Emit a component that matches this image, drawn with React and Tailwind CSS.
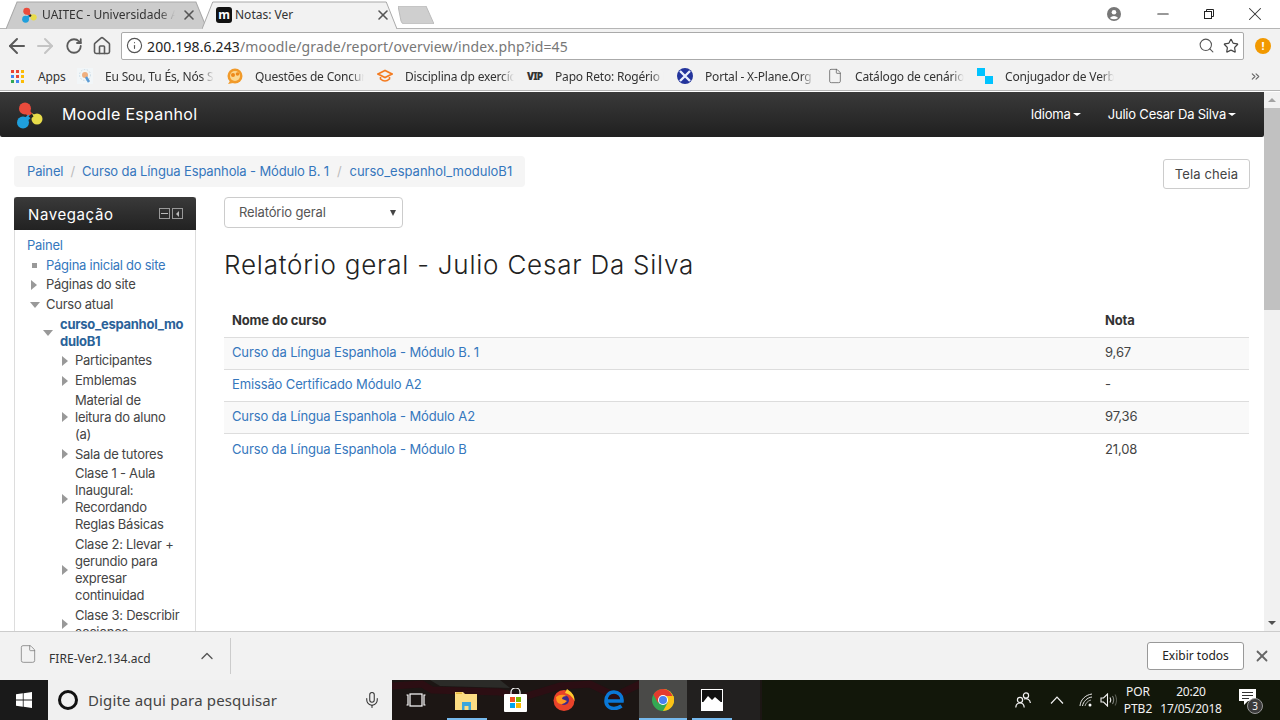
import React from 'react';
import { ArrowLeft, ArrowRight, RotateCw, Home, Info, Search, Star, ChevronUp, ChevronsRight, X, Minus, File, Mic } from 'lucide-react';

const uiFont = "font-['Noto_Sans',sans-serif]";
const pageFont = "font-['Inter',sans-serif]";

const MoodleLogo = ({ size = 28 }) => (
  <svg width={size} height={size} viewBox="0 0 28 28">
    <path d="M10 8 L16 15" stroke="#ea4b3c" strokeWidth="5" />
    <path d="M22 18 L16 14" stroke="#e8dc4a" strokeWidth="4" />
    <path d="M8 21 L15 15" stroke="#1f9fdc" strokeWidth="4" />
    <circle cx="10" cy="7.5" r="6" fill="#ea4b3c" />
    <circle cx="22" cy="18" r="5.5" fill="#e8dc4a" />
    <circle cx="8" cy="21.5" r="6" fill="#1f9fdc" />
    <path d="M13.5 15.5 L17 12.5 L18.5 15.5 L16 17.5 Z" fill="#222" />
  </svg>
);

const TabShape = ({ fill, stroke }) => (
  <svg className="absolute inset-0 w-full h-full" viewBox="0 0 200 28" preserveAspectRatio="none">
    <path d="M0 28 L11 1 H189 L200 28" fill={fill} stroke={stroke} strokeWidth="1" />
  </svg>
);

const GridIcon = () => {
  const colors = ['#ea4335', '#ea4335', '#fbbc05', '#4285f4', '#ea4335', '#fbbc05', '#34a853', '#4285f4', '#fbbc05'];
  return (
    <div className="grid grid-cols-3 gap-[2px] w-[13px]">
      {colors.map((c, i) => (
        <div key={i} className="w-[3px] h-[3px]" style={{ backgroundColor: c }} />
      ))}
    </div>
  );
};

const BulbIcon = () => (
  <svg width="16" height="16" viewBox="0 0 16 16">
    <rect width="16" height="16" fill="#f2f6f8" />
    <circle cx="8" cy="7" r="5.5" fill="none" stroke="#c9dbe6" strokeDasharray="1.5 1.5" />
    <circle cx="8" cy="7" r="3" fill="#f0b080" />
    <path d="M9 9 L12 14" stroke="#5b9bd5" strokeWidth="2.5" />
  </svg>
);

const ChatIcon = () => (
  <svg width="16" height="16" viewBox="0 0 16 16">
    <circle cx="8" cy="8" r="7.5" fill="#f19a2a" />
    <circle cx="8" cy="8" r="5" fill="#fbd78f" />
    <circle cx="6" cy="7" r="2" fill="#ee8a1a" />
    <circle cx="10.5" cy="6" r="1.8" fill="#ee8a1a" />
    <path d="M3 13 L1 16 L6 15 Z" fill="#f19a2a" />
  </svg>
);

const CapIcon = () => (
  <svg width="16" height="16" viewBox="0 0 16 16" fill="none" stroke="#f47b20" strokeWidth="1.6">
    <path d="M1 6 L8 2.5 L15 6 L8 9.5 Z" />
    <path d="M3.5 9 V11 Q8 15 12.5 11 V9" />
  </svg>
);

const VipIcon = () => (
  <span className="w-4 text-[10px] leading-none font-black tracking-[-0.08em] text-[#333]">VIP</span>
);

const XPlaneIcon = () => (
  <svg width="16" height="16" viewBox="0 0 16 16">
    <circle cx="8" cy="8" r="8" fill="#23349c" />
    <path d="M3 3 L13 13 M13 3 L3 13" stroke="#e8eefc" strokeWidth="2.4" />
  </svg>
);

const CheckerIcon = () => (
  <svg width="16" height="16" viewBox="0 0 16 16">
    <rect width="8" height="8" fill="#00c3ff" />
    <rect x="8" y="8" width="8" height="8" fill="#00c3ff" />
  </svg>
);

const bookmarks = [
  { icon: <BulbIcon />, label: 'Eu Sou, Tu És, Nós Somos' },
  { icon: <ChatIcon />, label: 'Questões de Concursos' },
  { icon: <CapIcon />, label: 'Disciplina dp exercícios' },
  { icon: <VipIcon />, label: 'Papo Reto: Rogério Flausino' },
  { icon: <XPlaneIcon />, label: 'Portal - X-Plane.Org' },
  { icon: <File size={18} strokeWidth={1.1} className="text-[#555]" />, label: 'Catálogo de cenários' },
  { icon: <CheckerIcon />, label: 'Conjugador de Verbos' },
];

const TriRight = () => <div className="w-0 h-0 border-y-[5px] border-y-transparent border-l-[6px] border-l-[#999]" />;
const TriDown = () => <div className="w-0 h-0 border-x-[5px] border-x-transparent border-t-[6px] border-t-[#999]" />;
const Bullet = () => <div className="w-[5px] h-[5px] bg-[#999] ml-[1px]" />;

const subItems = [
  ['Participantes'],
  ['Emblemas'],
  ['Material de', 'leitura do aluno', '(a)'],
  ['Sala de tutores'],
  ['Clase 1 - Aula', 'Inaugural:', 'Recordando', 'Reglas Básicas'],
  ['Clase 2: Llevar +', 'gerundio para', 'expresar', 'continuidad'],
  ['Clase 3: Describir', 'acciones'],
];

const TreeRow = ({ marker, className, lines, markerClass }) => (
  <div className={`flex items-center ${className}`}>
    <div className={`flex items-center shrink-0 ${markerClass}`}>{marker}</div>
    <div>
      {lines.map((l) => (
        <div key={l} className="whitespace-nowrap">{l}</div>
      ))}
    </div>
  </div>
);

const Sidebar = () => (
  <aside className="w-[182px] shrink-0 border-x border-[#ddd] self-start">
    <div className="h-[33px] -mx-px rounded-t-[3px] bg-gradient-to-b from-[#3a3a3a] to-[#222] flex items-center justify-between pl-[14px] pr-[13px]">
      <span className="pt-[3px] text-[15px] text-white tracking-[0.04em]">Navegação</span>
      <div className="flex gap-[2px]">
        <div className="w-[11px] h-[11px] border border-[#999] flex items-center justify-center">
          <div className="w-[7px] h-px bg-[#bbb]" />
        </div>
        <div className="w-[11px] h-[11px] border border-[#999] flex items-center justify-center">
          <div className="w-0 h-0 border-y-[3px] border-y-transparent border-r-[3px] border-r-[#bbb]" />
        </div>
      </div>
    </div>
    <div className="pt-[7px] pl-[12px] text-[13px] leading-[17px] tracking-[-0.02em] text-[#444] flex flex-col gap-[2.7px]">
      <div className="text-[#3577bd]">Painel</div>
      <TreeRow marker={<Bullet />} markerClass="w-[19px] pl-[4px]" className="text-[#3577bd]" lines={['Página inicial do site']} />
      <TreeRow marker={<TriRight />} markerClass="w-[19px] pl-[4px]" lines={['Páginas do site']} />
      <TreeRow marker={<TriDown />} markerClass="w-[19px] pl-[3px]" lines={['Curso atual']} />
      <TreeRow marker={<TriDown />} markerClass="w-[33px] pl-[16px]" className="font-bold text-[#2b6299]" lines={['curso_espanhol_mo', 'duloB1']} />
      {subItems.map((lines) => (
        <TreeRow key={lines[0]} marker={<TriRight />} markerClass="w-[48px] pl-[35px]" lines={lines} />
      ))}
    </div>
  </aside>
);

const courses = [
  { name: 'Curso da Língua Espanhola - Módulo B. 1', grade: '9,67', stripe: true },
  { name: 'Emissão Certificado Módulo A2', grade: '-' },
  { name: 'Curso da Língua Espanhola - Módulo A2', grade: '97,36', stripe: true },
  { name: 'Curso da Língua Espanhola - Módulo B', grade: '21,08' },
];

const Report = () => (
  <div className="flex-1 ml-[28px] mr-px">
    <div className="w-[179px] h-[31px] border border-[#ccc] rounded-[4px] flex items-center justify-between pl-[14px] pr-[6px] text-[13px] tracking-[-0.01em] text-[#555]">
      <span>Relatório geral</span>
      <div className="w-0 h-0 border-x-[3px] border-x-transparent border-t-[6px] border-t-[#444]" />
    </div>
    <h1 className="mt-[20px] text-[26px] leading-[34px] font-light text-[#222] tracking-[0.03em]">Relatório geral - Julio Cesar Da Silva</h1>
    <table className="mt-[22px] w-full border-collapse text-[13px] tracking-[-0.01em]">
      <thead>
        <tr className="h-[33px] text-[#333] text-left">
          <th className="pl-2 font-bold">Nome do curso</th>
          <th className="w-[144px] font-bold">Nota</th>
        </tr>
      </thead>
      <tbody>
        {courses.map((c) => (
          <tr key={c.name} className={`h-[32px] border-t border-[#ddd] ${c.stripe ? 'bg-[#f9f9f9]' : ''}`}>
            <td className="pl-2 text-[#3577bd]">{c.name}</td>
            <td className="text-[#444]">{c.grade}</td>
          </tr>
        ))}
      </tbody>
    </table>
  </div>
);

const ChromeIcon = () => (
  <svg width="22" height="22" viewBox="0 0 22 22">
    <circle cx="11" cy="11" r="11" fill="#34a853" />
    <path d="M11 0 A11 11 0 0 1 21.5 8 H11 Z" fill="#fbc116" />
    <path d="M11 0 A11 11 0 0 0 1.5 5.5 L6 14 L11 7 H20.5 A11 11 0 0 0 11 0 Z" fill="#e33b2e" />
    <path d="M21.5 7 A11 11 0 0 1 11 22 L15.5 14 L14 7 Z" fill="#fbc116" />
    <circle cx="11" cy="11" r="5" fill="#fff" />
    <circle cx="11" cy="11" r="4" fill="#4a80ee" />
  </svg>
);

const TaskItem = ({ children, className = '' }) => (
  <div className={`h-10 flex items-center justify-center relative ${className}`}>{children}</div>
);

const Taskbar = () => (
  <div className={`h-10 shrink-0 flex items-center relative overflow-hidden bg-[#15170c] ${uiFont}`}>
    {/* wallpaper behind the taskbar */}
    <svg className="absolute inset-0 w-full h-full" viewBox="0 0 1280 40" preserveAspectRatio="none">
      <rect x="392" width="370" height="40" fill="#1c1614" />
      <path d="M392 6 L422 4 L432 10 L500 12 L520 18 L560 6 L590 4 L615 16 L640 4 L680 0" fill="none" stroke="#2c0e13" strokeWidth="7" />
      <path d="M430 0 L500 0 L510 8 L440 6 Z" fill="#2b2b28" />
      <rect x="762" width="518" height="40" fill="#12170a" />
    </svg>
    <div className="w-12 h-10 bg-[#1a1a1a] flex items-center justify-center relative">
      <svg width="16" height="16" viewBox="0 0 16 16" fill="#fff">
        <path d="M0 2.3 L6.8 1.3 V7.6 H0 Z M7.6 1.2 L16 0 V7.6 H7.6 Z M0 8.4 H6.8 V14.7 L0 13.7 Z M7.6 8.4 H16 V16 L7.6 14.8 Z" />
      </svg>
    </div>
    <div className="w-[344px] h-10 bg-[#f0f0f0] flex items-center relative">
      <div className="ml-[10px] w-[20px] h-[20px] rounded-full border-[3px] border-[#111]" />
      <span className="ml-[10px] text-[15px] tracking-[0.01em] text-[#444]">Digite aqui para pesquisar</span>
      <Mic size={18} strokeWidth={1.4} className="absolute right-[11px] text-[#333]" />
    </div>
    <TaskItem className="w-[48px]">
      <svg width="20" height="14" viewBox="0 0 20 14" fill="none" stroke="#fff" strokeWidth="1.2">
        <rect x="4" y="1" width="12" height="12" />
        <path d="M0.5 2 H2 V12 H0.5 M19.5 2 H18 V12 H19.5" />
      </svg>
    </TaskItem>
    <TaskItem className="w-[51px]">
      <svg width="22" height="19" viewBox="0 0 22 19">
        <path d="M0 1 H8 L10 3 H22 V19 H0 Z" fill="#fcdc83" />
        <rect x="1" y="1.5" width="6" height="1.5" fill="#e8b93c" />
        <rect x="7" y="11" width="9" height="8" fill="#3aa6dd" />
        <rect x="9.5" y="15" width="4" height="4" fill="#fcdc83" />
      </svg>
      <div className="absolute bottom-0 left-[7px] w-[40px] h-[2px] bg-[#76b9ed]" />
    </TaskItem>
    <TaskItem className="w-[48px]">
      <svg width="23" height="24" viewBox="0 0 23 24">
        <path d="M7 6 V4 A4.5 4 0 0 1 16 4 V6" fill="none" stroke="#fff" strokeWidth="1.2" />
        <rect y="6" width="23" height="18" rx="1" fill="#fff" />
        <rect x="6" y="9" width="5" height="5" fill="#f25022" />
        <rect x="12" y="9" width="5" height="5" fill="#7fba00" />
        <rect x="6" y="15" width="5" height="5" fill="#00a4ef" />
        <rect x="12" y="15" width="5" height="5" fill="#ffb900" />
      </svg>
    </TaskItem>
    <TaskItem className="w-[50px]">
      <svg width="22" height="22" viewBox="0 0 22 22">
        <circle cx="11" cy="11.5" r="10.5" fill="#e8422a" />
        <path d="M14 0 Q22 5 21.5 12 Q18 5 12 4 Z" fill="#ffcb2e" />
        <circle cx="11" cy="11" r="5" fill="#3d2a8c" />
        <path d="M3 8 Q8 4 14 7 Q9 7 9 10 Q12 11 14 12 Q10 17 5 14 Q3 12 3 8 Z" fill="#ff9a1f" />
      </svg>
    </TaskItem>
    <TaskItem className="w-[49px]">
      <svg width="20" height="20" viewBox="0 0 20 20" fill="none" stroke="#0a78d7" strokeWidth="3.6">
        <path d="M1.5 11 H18 C18.5 5 14 2 10 2 C5 2 2 6 2 11 C2 16 6 18.5 10 18.5 C13 18.5 15.5 17.5 17.5 16" />
      </svg>
    </TaskItem>
    <TaskItem className="w-[48px] ml-[1px] bg-[#4a4a48]">
      <ChromeIcon />
      <div className="absolute bottom-0 inset-x-0 h-[2px] bg-[#76b9ed]" />
    </TaskItem>
    <TaskItem className="w-[73px] bg-[#22201f] justify-start pl-[14px]">
      <svg width="22" height="22" viewBox="0 0 22 22">
        <rect width="22" height="22" fill="#fff" />
        <rect x="1" y="1" width="20" height="12" fill="#111" />
        <path d="M0 16 L7 7 L11 11 L14 8 L22 15 V22 H0 Z" fill="#fff" />
      </svg>
      <div className="absolute bottom-0 left-[5px] w-[40px] h-[2px] bg-[#76b9ed]" />
    </TaskItem>
    <div className="ml-auto flex items-center text-[#f2f2f2] text-[12px] leading-[17px] relative">
      <svg width="16" height="16" viewBox="0 0 16 16" fill="none" stroke="#f2f2f2" strokeWidth="1.2" className="mr-[19px]">
        <circle cx="5" cy="8" r="2.6" />
        <path d="M0.8 15.5 C1 12 3 11 5 11 C7 11 9 12 9.2 15.5" />
        <circle cx="11" cy="3.5" r="2.6" />
        <path d="M9 7 C12 6 15 7.5 15.4 11" />
      </svg>
      <svg width="14" height="8" viewBox="0 0 14 8" fill="none" stroke="#f2f2f2" strokeWidth="1.2" className="mr-[15px]">
        <path d="M1 7.5 L7 1.2 L13 7.5" />
      </svg>
      <svg width="14" height="14" viewBox="0 0 14 14" fill="none" stroke="#e8e8e8" strokeWidth="1" className="mr-[7px]">
        <path d="M1 13 C1.5 7 6 2 13 1" />
        <path d="M3.5 13 C4 9 8 4.5 13 4" />
        <path d="M6 13 C6.5 10.5 9 7.5 12 7" strokeOpacity="0.7" />
        <circle cx="11" cy="12" r="1.5" fill="#fff" stroke="none" />
      </svg>
      <svg width="17" height="14" viewBox="0 0 17 14" fill="none" stroke="#f2f2f2" strokeWidth="1.1" className="mr-[6px]">
        <path d="M1 5 H3.5 L7.5 1 V13 L3.5 9 H1 Z" />
        <path d="M10 4.5 C11 6 11 8 10 9.5" />
        <path d="M12.5 3 C14 5.5 14 8.5 12.5 11" strokeOpacity="0.5" />
        <path d="M15 1.5 C17 5 17 9 15 12.5" strokeOpacity="0.3" />
      </svg>
      <div className="w-[30px] text-center mr-[7px] -mt-px">
        <div>POR</div>
        <div>PTB2</div>
      </div>
      <div className="w-[62px] text-center mr-[14px] -mt-px tracking-[-0.02em]">
        <div>20:20</div>
        <div>17/05/2018</div>
      </div>
      <div className="w-[24px] mr-[20px] relative h-[28px]">
        <svg width="17" height="17" viewBox="0 0 17 17" className="absolute left-[3px] top-[3px]">
          <path d="M0 0 H17 V12 H9 L5 16 V12 H0 Z" fill="#fff" />
          <path d="M3 3.5 H14 M3 6.5 H14 M3 9.5 H10" stroke="#333" />
        </svg>
        <div className="absolute -right-[3px] bottom-[0px] w-[16px] h-[16px] rounded-full bg-[#3a3a3a] border border-[#999] text-[10px] leading-[14px] text-center">3</div>
      </div>
    </div>
  </div>
);

export default function App() {
  return (
    <div className="w-[1280px] h-[720px] flex flex-col overflow-hidden bg-white">
      {/* browser tab strip */}
      <div className={`h-[29px] shrink-0 flex items-end pl-[6px] border-b border-[#b5b5b5] bg-white ${uiFont}`}>
        <div className="w-[201px] h-[28px] relative flex items-center pl-[15px] pr-[10px] -mb-px">
          <TabShape fill="#cccccc" stroke="#a8a8a8" />
          <div className="relative shrink-0 w-4"><MoodleLogo size={16} /></div>
          <span className="relative ml-[5px] w-[133px] overflow-hidden whitespace-nowrap text-[12px] text-[#333] [mask-image:linear-gradient(to_right,black_88%,transparent)]">UAITEC - Universidade Aberta</span>
          <X size={16} strokeWidth={2.4} className="relative ml-auto text-[#555]" />
        </div>
        <div className="w-[195px] h-[28px] -ml-[5px] relative flex items-center pl-[10px] pr-[6px] -mb-px">
          <TabShape fill="#f2f2f2" stroke="#a8a8a8" />
          <div className="relative ml-[4px] w-4 h-4 rounded-[3px] bg-[#111] text-white text-[12px] leading-[15px] font-bold text-center">m</div>
          <span className="relative ml-[3px] text-[12px] text-[#333]">Notas: Ver</span>
          <X size={16} strokeWidth={2.4} className="relative ml-auto text-[#555]" />
        </div>
        <div className="w-[36px] h-[18px] relative mb-[4px] ml-[1px]">
          <svg className="w-full h-full" viewBox="0 0 36 18">
            <path d="M0 0 H28 L36 18 H6 Q4 18 3 15 Z" fill="#cfcfcf" stroke="#bbb" />
          </svg>
        </div>
        <div className="ml-auto h-[28px] flex items-center text-[#333] -mb-px -mt-[3px] pb-[3px]">
          <svg width="14" height="14" viewBox="0 0 14 14" className="mr-[19px]">
            <circle cx="7" cy="7" r="7" fill="#777" />
            <circle cx="7" cy="5.2" r="2.3" fill="#fff" />
            <path d="M2.8 11 Q7 6.8 11.2 11 Q7 13.5 2.8 11 Z" fill="#fff" />
          </svg>
          <div className="w-[46px] flex justify-center"><Minus size={18} strokeWidth={1.4} /></div>
          <div className="w-[46px] flex justify-center">
            <svg width="10" height="10" viewBox="0 0 10 10" fill="none" stroke="#222">
              <rect x="0.5" y="2.5" width="7" height="7" />
              <path d="M2.5 2.5 V0.5 H9.5 V7.5 H7.5" />
            </svg>
          </div>
          <div className="w-[46px] mr-[2px] flex justify-center"><X size={22} strokeWidth={1.1} /></div>
        </div>
      </div>

      {/* toolbar */}
      <div className={`h-[33px] shrink-0 bg-[#f2f2f2] flex items-center pl-[3px] ${uiFont}`}>
        <div className="w-[28px] flex justify-center"><ArrowLeft size={24} strokeWidth={2} className="text-[#5a5a5a]" /></div>
        <div className="w-[28px] flex justify-center"><ArrowRight size={24} strokeWidth={2} className="text-[#c4c4c4]" /></div>
        <div className="w-[29px] flex justify-center"><RotateCw size={18} strokeWidth={2.4} className="text-[#5a5a5a]" /></div>
        <div className="w-[28px] flex justify-center"><Home size={20} strokeWidth={1.9} className="text-[#5a5a5a]" /></div>
        <div className="ml-[5px] w-[1123px] h-[28px] bg-white border border-[#aaa] rounded-[2px] flex items-center pl-[4px] pr-[4px]">
          <Info size={17} strokeWidth={1.6} className="text-[#555]" />
          <span className="ml-[4px] pt-[1px] text-[14px] tracking-[0.009em] text-[#222]">200.198.6.243<span className="text-[#777]">/moodle/grade/report/overview/index.php?id=45</span></span>
          <Search size={17} strokeWidth={1.5} className="ml-auto mr-[8px] text-[#555]" />
          <Star size={16} strokeWidth={1.8} className="text-[#444]" />
        </div>
        <div className="ml-[11px] w-4 h-4 rounded-full bg-[#f29900] text-white text-[11px] leading-4 font-bold text-center">!</div>
      </div>

      {/* bookmarks */}
      <div className={`h-[29px] shrink-0 bg-[#f2f2f2] border-b border-[#b5b5b5] flex items-center text-[12px] tracking-[-0.015em] text-[#333] ${uiFont}`}>
        <div className="ml-[11px]"><GridIcon /></div>
        <span className="ml-[14px] w-[39px] pt-px">Apps</span>
        {bookmarks.map((b) => (
          <div key={b.label} className="w-[150px] flex items-center">
            <div className="w-4 flex justify-center shrink-0">{b.icon}</div>
            <span className="ml-[12px] w-[109px] pt-px overflow-hidden whitespace-nowrap [mask-image:linear-gradient(to_right,black_88%,transparent)]">{b.label}</span>
          </div>
        ))}
        <ChevronsRight size={13} className="ml-[122px] text-[#666]" />
      </div>

      {/* page */}
      <div className={`flex-1 min-h-0 flex mt-px ${pageFont}`}>
        <div className="w-[1264px] overflow-hidden">
          <div className="h-[45px] rounded-b-[2px] bg-gradient-to-b from-[#3a3a3a] to-[#202020] flex items-center pl-[15px] text-white">
            <MoodleLogo />
            <span className="ml-[19px] -mt-px text-[16px] tracking-[0.02em]">Moodle Espanhol</span>
            <div className="ml-auto flex items-center text-[13px] tracking-[-0.015em]">
              <span>Idioma</span>
              <div className="ml-[2px] w-0 h-0 border-x-[4px] border-x-transparent border-t-[3px] border-t-white" />
              <span className="ml-[27px]">Julio Cesar Da Silva</span>
              <div className="ml-[2px] mr-[28px] w-0 h-0 border-x-[4px] border-x-transparent border-t-[3px] border-t-white" />
            </div>
          </div>
          <div className="px-[14px]">
            <div className="mt-[19px] flex justify-between items-start">
              <div className="h-[31px] w-[511px] bg-[#f5f5f5] rounded-[4px] flex items-center pl-[13px] text-[13px] tracking-[-0.01em] text-[#3577bd] whitespace-nowrap">
                Painel<span className="text-[#bbb] mx-[7px]">/</span>Curso da Língua Espanhola - Módulo B. 1<span className="text-[#bbb] mx-[8px]">/</span><span className="tracking-normal">curso_espanhol_moduloB1</span>
              </div>
              <div className="mt-[3px] w-[87px] h-[30px] pt-px border border-[#ccc] rounded-[3px] flex items-center justify-center text-[13px] tracking-[0.01em] text-[#444]">Tela cheia</div>
            </div>
            <div className="mt-[8px] flex">
              <Sidebar />
              <Report />
            </div>
          </div>
        </div>
        <div className="w-4 bg-[#f1f1f1] flex flex-col items-center">
          <div className="h-[16px] flex items-center"><div className="w-0 h-0 border-x-[4px] border-x-transparent border-b-[4px] border-b-[#a3a3a3]" /></div>
          <div className="w-full h-[202px] bg-[#c1c1c1]" />
          <div className="mt-auto h-[16px] flex items-center"><div className="w-0 h-0 border-x-[4px] border-x-transparent border-t-[4px] border-t-[#505050]" /></div>
        </div>
      </div>

      {/* downloads */}
      <div className={`h-[49px] shrink-0 bg-[#f2f2f2] border-t border-[#ccc] flex items-center text-[#333] ${uiFont}`}>
        <File size={20} strokeWidth={0.9} className="ml-[18px] -mt-[4px] text-[#777]" />
        <span className="ml-[11px] pt-[5px] text-[12px] tracking-[0.005em]">FIRE-Ver2.134.acd</span>
        <ChevronUp size={20} strokeWidth={1.6} className="ml-[46px] -mt-[1px] text-[#555]" />
        <div className="ml-[13px] w-px h-[36px] bg-[#ccc]" />
        <div className="ml-auto -mt-px w-[97px] h-[28px] bg-white border border-[#999] rounded-[3px] flex items-center justify-center text-[12px] text-[#222]">Exibir todos</div>
        <X size={18} strokeWidth={2.4} className="ml-[9px] mr-[9px] text-[#666]" />
      </div>

      <Taskbar />
    </div>
  );
}
